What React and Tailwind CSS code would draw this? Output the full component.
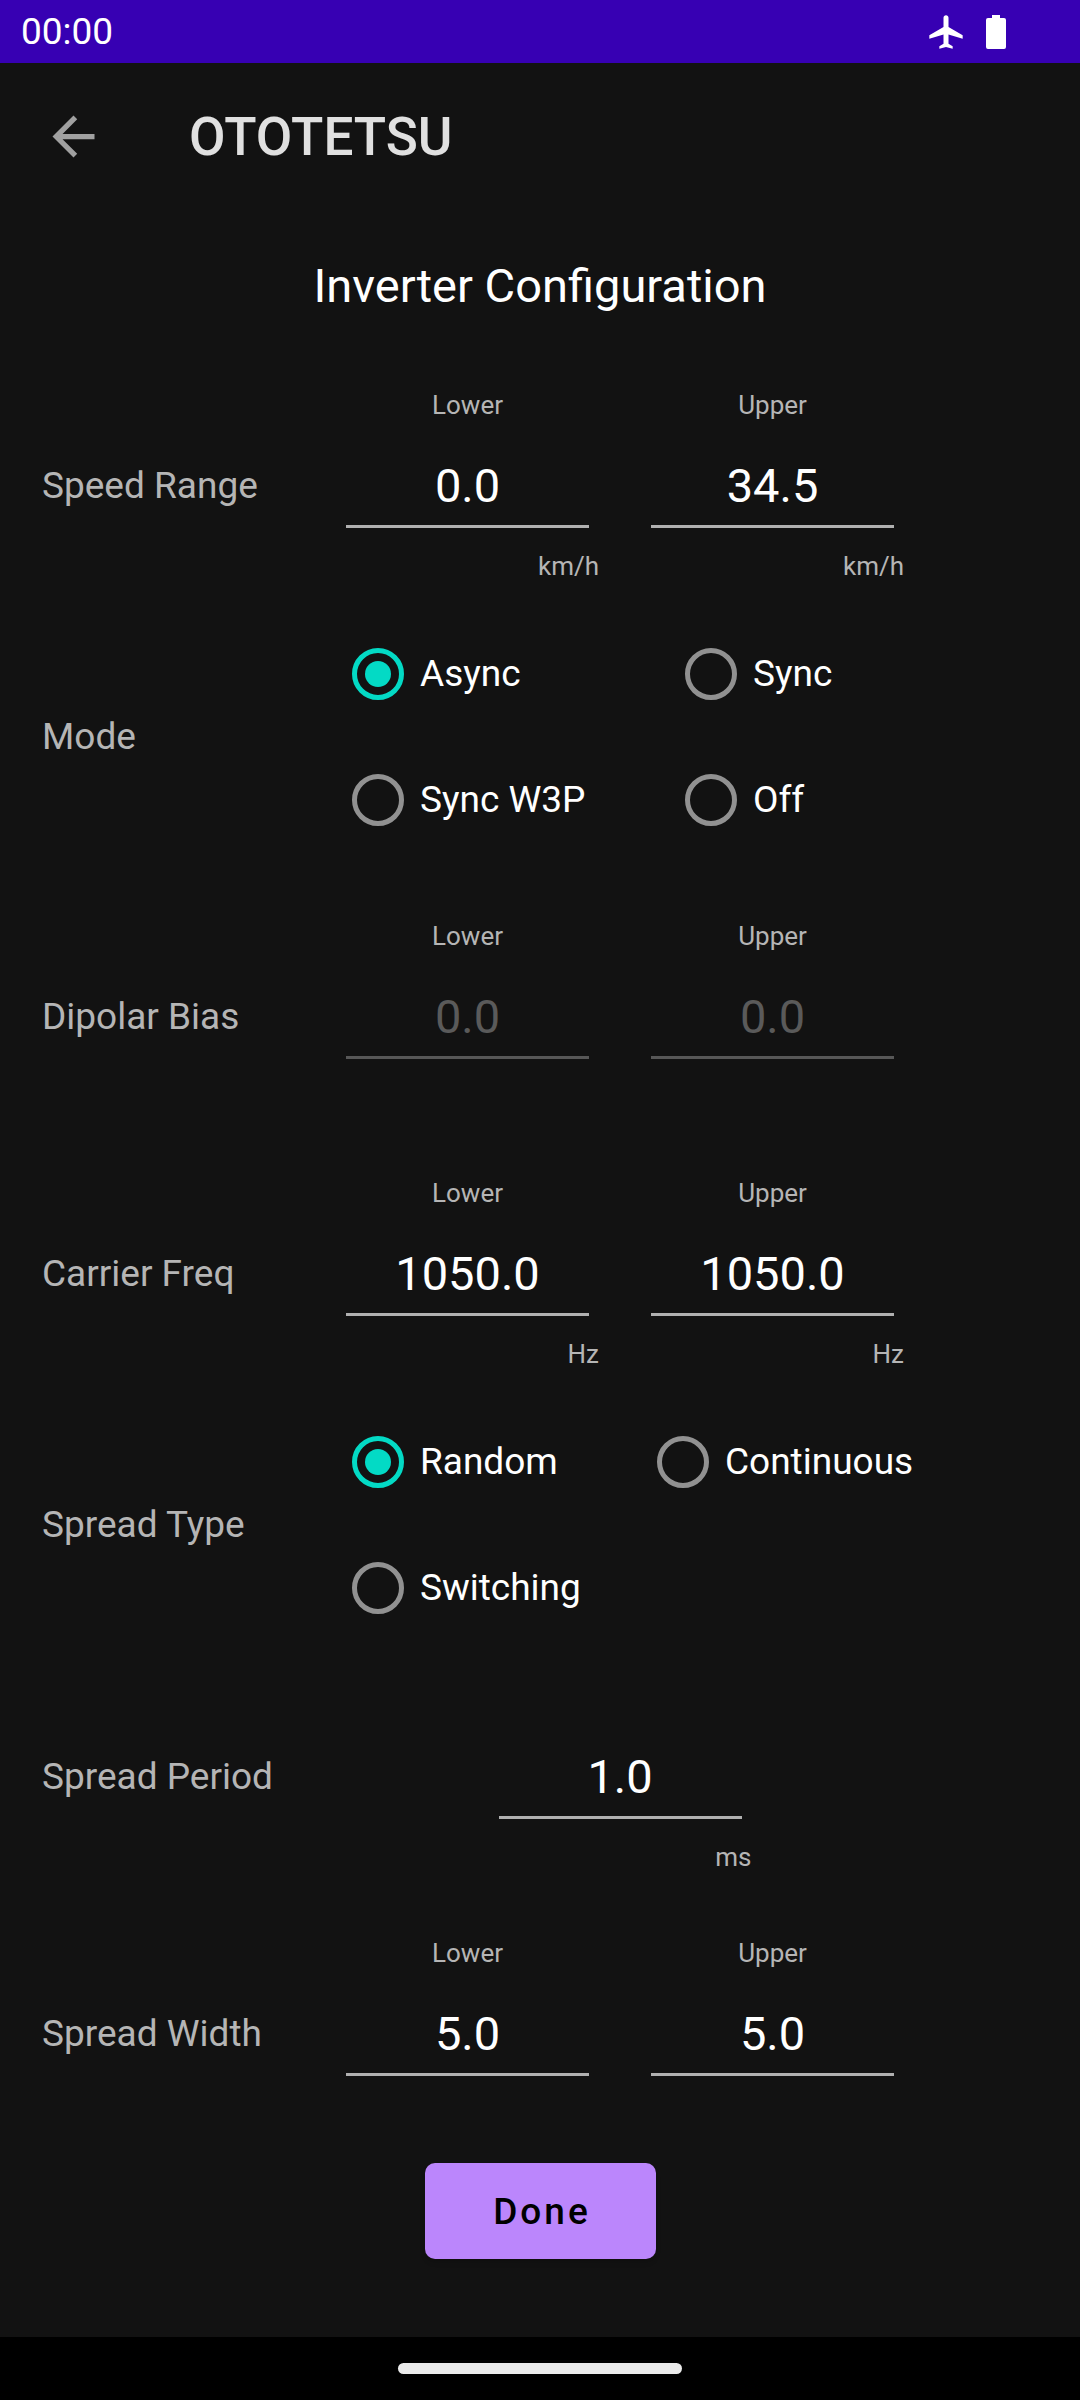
import { useState } from "react";
import { MdArrowBack, MdAirplanemodeActive } from "react-icons/md";

const StatusBar = () => {
  return (
    <div className="h-[63px] bg-[#3700b3] pl-[21px] pr-[74px] flex items-center justify-between">
      <span className="text-[37px] leading-[44px]">00:00</span>
      <div className="flex items-center gap-5">
        <MdAirplanemodeActive className="size-10" />
        <svg className="w-5 h-[34px]" viewBox="0 0 20 34" fill="currentColor">
          <path d="M6 0h8v3h4a2 2 0 0 1 2 2v27a2 2 0 0 1-2 2H2a2 2 0 0 1-2-2V5a2 2 0 0 1 2-2h4z" />
        </svg>
      </div>
    </div>
  );
};

const Row = ({ id, title, className = "", children }) => {
  return (
    <div role="group" aria-labelledby={id} className={`flex items-center ${className}`}>
      <span id={id} className="w-[294px] shrink-0 text-[37px] leading-[44px] text-[#b5b5b5]">{title}</span>
      <div className="flex-1 max-w-[568px]">{children}</div>
    </div>
  );
};

const NumberField = ({ id, label, name, value, unit, disabled }) => {
  const [text, setText] = useState(value);
  return (
    <div className="flex-1 max-w-[263px] flex flex-col text-[26px] leading-8 text-[#b5b5b5]">
      <label htmlFor={id} className="h-8 text-center">{label}</label>
      <div className="px-[10px] pt-9">
        <input
          id={id}
          type="text"
          inputMode="decimal"
          aria-label={label ? undefined : name}
          value={text}
          disabled={disabled}
          onChange={(e) => setText(e.target.value)}
          className="block w-full h-[71px] pb-3 border-b-[3px] border-[#b0b0b0] bg-transparent text-center text-[47px] leading-[56px] text-white outline-none disabled:border-[#575757] disabled:text-[#5a5a5a]"
        />
      </div>
      <span className="h-8 mt-[22px] text-right">{unit}</span>
    </div>
  );
};

const FieldRow = ({ id, title, fields, unit, disabled }) => {
  return (
    <Row id={id} title={title} className="py-8">
      <div className="flex justify-center gap-[42px]">
        {fields.map((f, i) => (
          <NumberField key={i} id={`${id}-${i}`} name={title} label={f.label} value={f.value} unit={unit} disabled={disabled} />
        ))}
      </div>
    </Row>
  );
};

const RadioRow = ({ id, title, options, columns, className }) => {
  const [selected, setSelected] = useState(options[0]);
  return (
    <Row id={id} title={title} className={className}>
      <div className={`grid gap-y-[6px] ${columns}`}>
        {options.map((o) => (
          <label key={o} className="h-[120px] pl-4 flex items-center gap-4 text-[37px] leading-[44px] whitespace-nowrap">
            <input
              type="radio"
              name={id}
              checked={selected === o}
              onChange={() => setSelected(o)}
              className="appearance-none size-[52px] shrink-0 rounded-full border-[5px] border-[#919191] p-2 bg-clip-content checked:border-[#03dac5] checked:bg-[#03dac5]"
            />
            {o}
          </label>
        ))}
      </div>
    </Row>
  );
};

const range = (lower, upper) => [
  { label: "Lower", value: lower },
  { label: "Upper", value: upper },
];

const App = () => {
  return (
    <div className="min-h-screen flex flex-col bg-[#121212] text-white font-['Roboto',sans-serif]">
      <StatusBar />
      <header className="h-[147px] px-[42px] flex items-center gap-[84px]">
        <button aria-label="Back" className="text-[#a0a0a0]">
          <MdArrowBack className="size-[63px]" />
        </button>
        <h1 className="text-[53px] leading-[62px] font-medium text-[#e0e0e0]">OTOTETSU</h1>
      </header>
      <main className="px-[42px] pt-12">
        <h2 className="mb-[43px] text-center text-[47px] leading-[56px]">Inverter Configuration</h2>
        <FieldRow id="speed-range" title="Speed Range" fields={range("0.0", "34.5")} unit="km/h" />
        <RadioRow
          id="mode"
          title="Mode"
          options={["Async", "Sync", "Sync W3P", "Off"]}
          columns="grid-cols-[333px_1fr]"
          className="mb-7"
        />
        <FieldRow id="dipolar-bias" title="Dipolar Bias" fields={range("0.0", "0.0")} disabled />
        <FieldRow id="carrier-freq" title="Carrier Freq" fields={range("1050.0", "1050.0")} unit="Hz" />
        <RadioRow
          id="spread-type"
          title="Spread Type"
          options={["Random", "Continuous", "Switching"]}
          columns="grid-cols-[305px_1fr]"
        />
        <FieldRow id="spread-period" title="Spread Period" fields={[{ value: "1.0" }]} unit="ms" />
        <FieldRow id="spread-width" title="Spread Width" fields={range("5.0", "5.0")} />
        <div className="pt-px flex justify-center">
          <button className="w-[231px] h-24 pl-1 pt-0.5 rounded-[10px] bg-[#bb86fc] text-black text-[37px] leading-[44px] font-medium tracking-[3px] shadow-md">
            Done
          </button>
        </div>
      </main>
      <div className="mt-auto h-[63px] bg-black flex items-center justify-center">
        <div className="w-[284px] h-[11px] rounded-full bg-[#ebebeb]"></div>
      </div>
    </div>
  );
};

export default App;
